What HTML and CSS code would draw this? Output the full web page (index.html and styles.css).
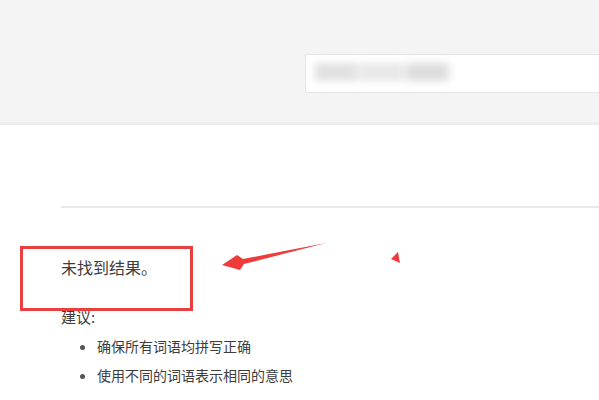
FILE: index.html
```html
<!DOCTYPE html>
<html lang="zh-CN">
<head>
    <meta charset="UTF-8">
    <meta name="viewport" content="width=device-width, initial-scale=1.0">
    <title>搜索结果</title>
    <link rel="stylesheet" href="styles.css">
</head>
<body>
    <div class="top">
        <div class="search">
            <div class="blur-words">
                <span class="blob b1"></span>
                <span class="blob b2"></span>
                <span class="blob b3"></span>
            </div>
        </div>
    </div>

    <div class="content">
        <div class="divider"></div>
        <p class="no-result">未找到结果。</p>
        <p class="tips-title">建议:</p>
        <ul class="tips">
            <li>确保所有词语均拼写正确</li>
            <li>使用不同的词语表示相同的意思</li>
        </ul>
    </div>

    <!-- red annotation marks drawn over the page -->
    <div class="mark-box"></div>
    <svg class="mark-arrow" width="599" height="400" viewBox="0 0 599 400">
        <polygon points="326,243 243,259 237,255 222,265 240,270 244,264" fill="#ee3b3b"/>
        <polygon points="398,252 391,259 400,263" fill="#ee3b3b"/>
    </svg>
</body>
</html>
```

FILE: styles.css
```css
body{
    margin: 0;
    background-color: white;
    color: #3c3c3c;
    font-family: "Noto Sans CJK SC", "Liberation Sans", sans-serif;
    overflow: hidden;
}
.top{
    height: 125px;
    background-color: #f4f4f4;
    border-bottom: 3px solid #ededed;
    padding: 54px 0 0 305px;
    box-sizing: border-box;
}
.search{
    height: 39px;
    background-color: white;
    border: 1px solid #e6e6e6;
    border-right: none;
    box-sizing: border-box;
    padding: 8px 0 0 9px;
}
.blur-words{
    display: flex;
    gap: 2px;
    filter: blur(4px);
}
.blob{
    display: block;
    height: 18px;
    background-color: #e0e0e0;
}
.b1{ width: 42px; }
.b2{ width: 46px; background-color: #e8e8e8; }
.b3{ width: 42px; background-color: #dcdcdc; }

.content{
    padding-left: 61px;
}
.divider{
    margin-top: 81px;
    border-top: 2px solid #e8e8e8;
}
.no-result{
    margin: 47px 0 0;
    font-size: 16px;
    line-height: 24px;
}
.tips-title{
    margin: 27px 0 0;
    font-size: 15px;
    line-height: 22px;
}
.tips{
    margin: 4px 0 0;
    padding-left: 36px;
    font-size: 14px;
    line-height: 29px;
}
.tips li::marker{
    color: #555555;
}

.mark-box{
    position: absolute;
    left: 20px;
    top: 246px;
    width: 167px;
    height: 59px;
    border: 3px solid #e8403f;
}
.mark-arrow{
    position: absolute;
    left: 0;
    top: 0;
}
```
